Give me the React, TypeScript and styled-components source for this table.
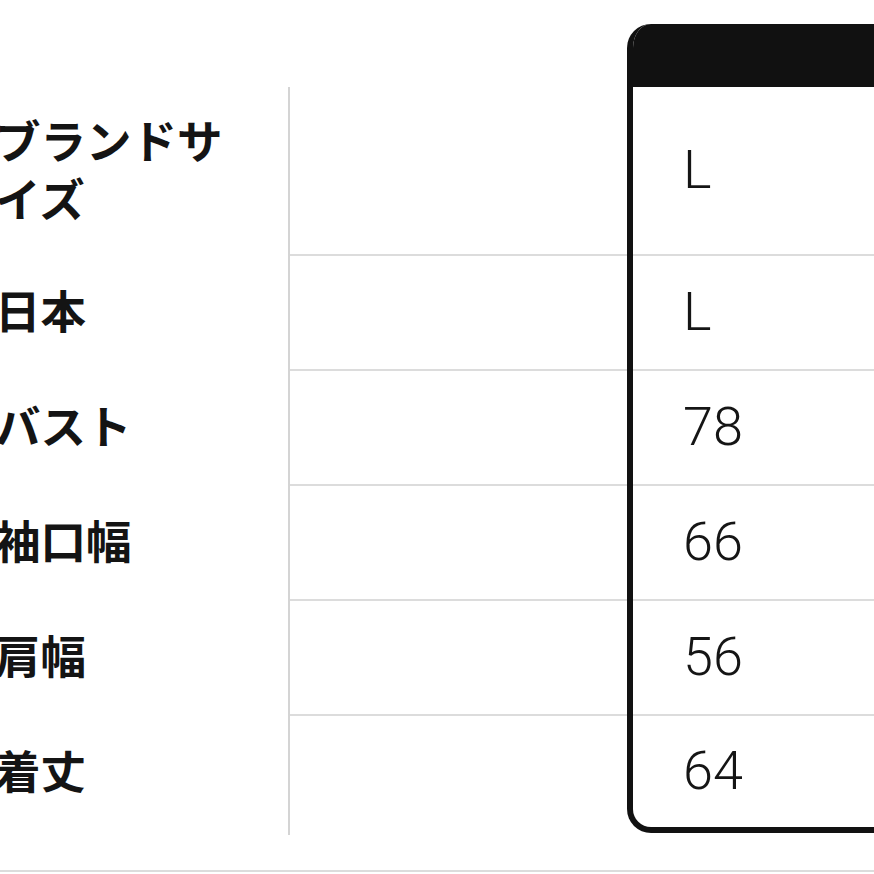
import React from 'react';
import styled, { createGlobalStyle } from 'styled-components';

const GlobalStyle = createGlobalStyle`
  *, *::before, *::after {
    box-sizing: border-box;
  }
  html, body {
    margin: 0;
    padding: 0;
    background: #ffffff;
  }
  body {
    width: 874px;
    height: 874px;
    overflow: hidden;
  }
`;

const Page = styled.div`
  width: 874px;
  height: 874px;
  overflow: hidden;
  padding-top: 24px;
  display: flex;
  flex-direction: column;
`;

const Table = styled.div`
  display: flex;
  align-items: flex-start;
  width: 1000px;
`;

const LabelColumn = styled.div`
  width: 293px;
  flex-shrink: 0;
  padding-top: 63px;
  margin-left: -5px;
  display: flex;
  flex-direction: column;
`;

const LabelCell = styled.div<{ $tall?: boolean }>`
  height: ${({ $tall }) => ($tall ? '167px' : '115px')};
  display: flex;
  align-items: center;
  font-family: 'Noto Sans CJK JP', 'Noto Sans', sans-serif;
  font-weight: 700;
  font-size: 45.5px;
  line-height: 58px;
  color: #141414;
  width: 242px;
  padding-bottom: 5px;
`;

const MidColumn = styled.div`
  width: 339px;
  flex-shrink: 0;
  margin-top: 63px;
  border-left: 2px solid #d4d4d4;
  display: flex;
  flex-direction: column;
`;

const MidCell = styled.div<{ $tall?: boolean; $last?: boolean }>`
  height: ${({ $tall, $last }) => ($tall ? '167px' : $last ? '121px' : '115px')};
  border-top: ${({ $tall }) => ($tall ? 'none' : '2px solid #dcdcdc')};
`;

const SizeBox = styled.div`
  width: 360px;
  flex-shrink: 0;
  border: 6px solid #111111;
  border-top: none;
  border-radius: 24px;
  overflow: hidden;
  display: flex;
  flex-direction: column;
`;

const BoxHeader = styled.div`
  height: 63px;
  background: #111111;
  margin: 0 -6px;
`;

const ValueCell = styled.div<{ $tall?: boolean; $last?: boolean }>`
  height: ${({ $tall, $last }) => ($tall ? '167px' : $last ? '113px' : '115px')};
  border-top: ${({ $tall }) => ($tall ? 'none' : '2px solid #dcdcdc')};
  display: flex;
  align-items: center;
  padding-left: 50px;
  padding-bottom: 2px;
  font-family: 'Roboto', 'Liberation Sans', sans-serif;
  font-weight: 300;
  font-size: 54px;
  color: #151515;
`;

const BottomRule = styled.div`
  margin-top: 35px;
  height: 2px;
  background: #dcdcdc;
`;

const rows = [
  { label: 'ブランドサイズ', value: 'L' },
  { label: '日本', value: 'L' },
  { label: 'バスト', value: '78' },
  { label: '袖口幅', value: '66' },
  { label: '肩幅', value: '56' },
  { label: '着丈', value: '64' },
];

export default function App() {
  return (
    <>
      <GlobalStyle />
      <Page>
        <Table>
          <LabelColumn>
            {rows.map((r, i) => (
              <LabelCell key={r.label} $tall={i === 0}>
                <span>{r.label}</span>
              </LabelCell>
            ))}
          </LabelColumn>
          <MidColumn>
            {rows.map((r, i) => (
              <MidCell key={r.label} $tall={i === 0} $last={i === rows.length - 1} />
            ))}
          </MidColumn>
          <SizeBox>
            <BoxHeader />
            {rows.map((r, i) => (
              <ValueCell key={r.label} $tall={i === 0} $last={i === rows.length - 1}>
                {r.value}
              </ValueCell>
            ))}
          </SizeBox>
        </Table>
        <BottomRule />
      </Page>
    </>
  );
}
